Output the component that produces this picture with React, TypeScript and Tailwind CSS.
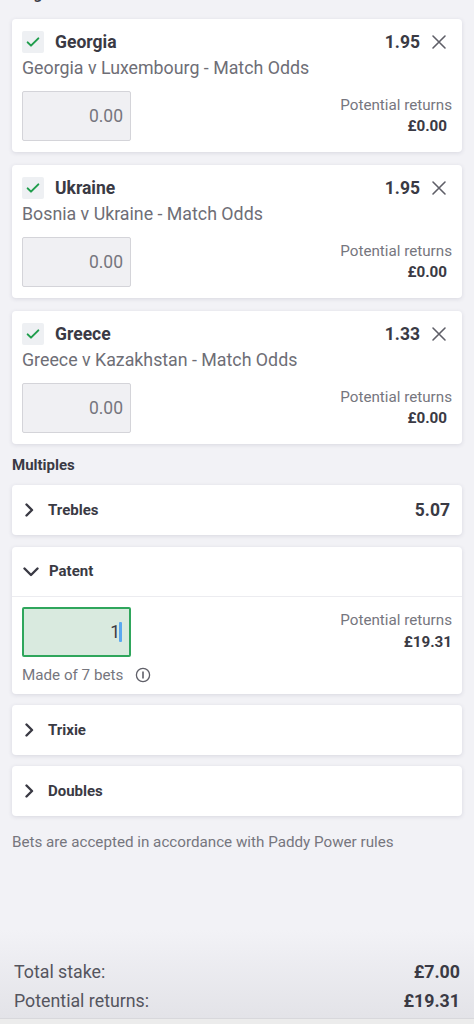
import React from "react";

const Check = () => (
  <svg width="16" height="16" viewBox="0 0 24 24" fill="none" stroke="#1f9d4c" strokeWidth="3" strokeLinecap="round" strokeLinejoin="round">
    <path d="M4 12.5l5 5L20 6.5" />
  </svg>
);

const Close = () => (
  <svg width="16" height="16" viewBox="0 0 16 16" fill="none" stroke="#5f5f68" strokeWidth="1.6" strokeLinecap="round">
    <path d="M2 2l12 12M14 2L2 14" />
  </svg>
);

const ChevronRight = () => (
  <svg width="10" height="14" viewBox="0 0 10 14" fill="none" stroke="#3a3a44" strokeWidth="2.4" strokeLinecap="round" strokeLinejoin="round">
    <path d="M2.5 1.5l5.5 5.5-5.5 5.5" />
  </svg>
);

const ChevronDown = () => (
  <svg width="16" height="10" viewBox="0 0 16 10" fill="none" stroke="#3a3a44" strokeWidth="2.4" strokeLinecap="round" strokeLinejoin="round">
    <path d="M1.5 1.5l6.5 6.5 6.5-6.5" />
  </svg>
);

const Info = () => (
  <svg width="16" height="16" viewBox="0 0 16 16" fill="none" stroke="#5f5f68" strokeWidth="1.3">
    <circle cx="8" cy="8" r="6.6" />
    <path d="M8 4.6v6.8" strokeWidth="1.6" />
  </svg>
);

const card = "bg-white rounded-[4px] shadow-[0_1px_4px_rgba(60,60,90,0.14)]";

function Single({ name, odds, event }: { name: string; odds: string; event: string }) {
  return (
    <div className={`${card} px-[10px] pt-[12px] pb-[11px]`}>
      <div className="flex items-center h-[22px]">
        <div className="w-[22px] h-[22px] rounded-[2px] bg-[#eef0f3] flex items-center justify-center">
          <Check />
        </div>
        <div className="ml-[11px] text-[17.5px] font-bold text-[#3a3a44]">{name}</div>
        <div className="ml-auto text-[17.5px] font-bold text-[#3a3a44]">{odds}</div>
        <div className="ml-[11px] mr-[5px] flex items-center">
          <Close />
        </div>
      </div>
      <div className="mt-[3px] text-[17.8px] leading-[24px] text-[#6e6e76]">{event}</div>
      <div className="mt-[11px] flex items-center justify-between">
        <div className="w-[109px] h-[50px] bg-[#f0f0f3] border border-[#d4d4d9] rounded-[2px] flex items-center justify-end pr-[7px] text-[17.5px] text-[#76767e]">
          0.00
        </div>
        <div className="flex flex-col items-end">
          <div className="text-[15.2px] leading-[20px] text-[#76767e]">Potential returns</div>
          <div className="text-[15.2px] leading-[23px] font-bold text-[#3a3a44] pr-[5px]">£0.00</div>
        </div>
      </div>
    </div>
  );
}

function Collapsed({ title, value }: { title: string; value?: string }) {
  return (
    <div className={`${card} h-[50px] flex items-center pl-[12px] pr-[12px]`}>
      <div className="w-[12px] flex items-center">
        <ChevronRight />
      </div>
      <div className="ml-[12px] text-[15px] font-bold text-[#3a3a44]">{title}</div>
      {value && <div className="ml-auto text-[17.5px] font-bold text-[#3a3a44]">{value}</div>}
    </div>
  );
}

export default function App() {
  return (
    <div
      className="w-[474px] h-[1024px] bg-[#f2f2f6] flex flex-col overflow-hidden"
      style={{ fontFamily: "Roboto, 'Noto Sans', sans-serif" }}
    >
      <div className="h-[6px] overflow-hidden relative px-[12px]">
        <div className="text-[15px] font-bold text-[#3a3a44] leading-[20px] -mt-[16px]">Singles</div>
      </div>
      <div className="px-[12px] pt-[13px] flex flex-col gap-[13px]">
        <Single name="Georgia" odds="1.95" event="Georgia v Luxembourg - Match Odds" />
        <Single name="Ukraine" odds="1.95" event="Bosnia v Ukraine - Match Odds" />
        <Single name="Greece" odds="1.33" event="Greece v Kazakhstan - Match Odds" />
      </div>
      <div className="px-[12px] mt-[11px] text-[15px] leading-[20px] font-bold text-[#3a3a44]">Multiples</div>
      <div className="px-[12px] mt-[10px] flex flex-col">
        <Collapsed title="Trebles" value="5.07" />
        <div className={`${card} mt-[12px]`}>
          <div className="h-[50px] flex items-center pl-[11px] border-b border-[#ececf0]">
            <div className="w-[16px] flex items-center">
              <ChevronDown />
            </div>
            <div className="ml-[10px] text-[15px] font-bold text-[#3a3a44]">Patent</div>
          </div>
          <div className="px-[10px] pt-[10px] pb-[9px]">
            <div className="flex items-center justify-between">
              <div className="w-[109px] h-[50px] bg-[#d9eadf] border-2 border-[#2fa65c] rounded-[2px] flex items-center justify-end pr-[7px] text-[17.5px] text-[#3a3a44]">
                <span>1</span>
                <span className="w-[3px] h-[20px] bg-[#5aa8f0] rounded-[1px] -ml-[1px]" />
              </div>
              <div className="flex flex-col items-end">
                <div className="text-[15.2px] leading-[20px] text-[#76767e]">Potential returns</div>
                <div className="text-[15.2px] leading-[25px] font-bold text-[#3a3a44]">£19.31</div>
              </div>
            </div>
            <div className="mt-[8px] flex items-center text-[15.2px] leading-[20px] text-[#76767e]">
              <span>Made of 7 bets</span>
              <span className="ml-[12px] flex items-center">
                <Info />
              </span>
            </div>
          </div>
        </div>
        <div className="mt-[11px]">
          <Collapsed title="Trixie" />
        </div>
        <div className="mt-[11px]">
          <Collapsed title="Doubles" />
        </div>
      </div>
      <div className="px-[12px] mt-[16px] text-[15.2px] leading-[20px] text-[#76767e]">
        Bets are accepted in accordance with Paddy Power rules
      </div>
      <div className="mt-auto bg-gradient-to-b from-[#f2f2f6] to-[#e3e3e8] px-[14px] pt-[28px] pb-[2px]">
        <div className="flex justify-between items-center h-[29px] text-[17.8px]">
          <span className="text-[#55555e]">Total stake:</span>
          <span className="font-bold text-[#3a3a44]">£7.00</span>
        </div>
        <div className="flex justify-between items-center h-[29px] text-[17.8px]">
          <span className="text-[#55555e]">Potential returns:</span>
          <span className="font-bold text-[#3a3a44]">£19.31</span>
        </div>
      </div>
      <div className="h-[6px] bg-[#ececec] border-t border-[#d8d8dc]" />
    </div>
  );
}
